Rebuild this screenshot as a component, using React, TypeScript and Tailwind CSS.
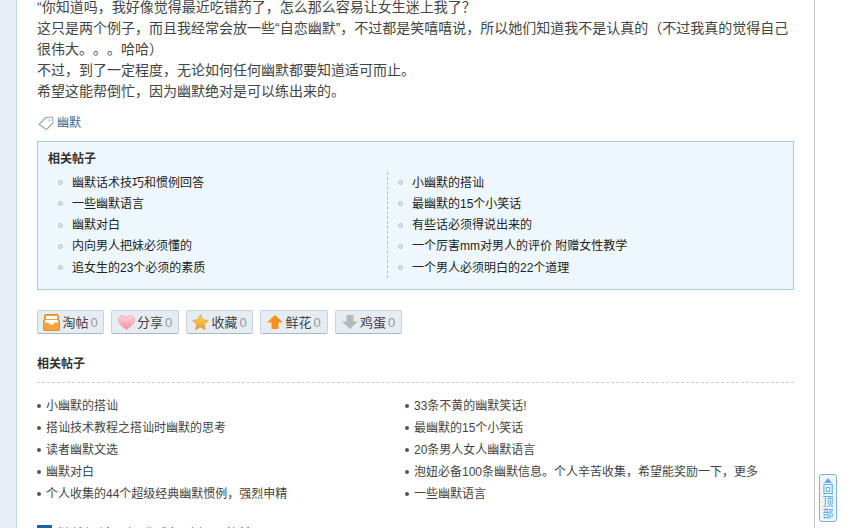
const FONT = "font-['Liberation_Sans','Noto_Sans_CJK_SC',sans-serif] [text-spacing-trim:space-all]";

const boxLeft = ['幽默话术技巧和惯例回答', '一些幽默语言', '幽默对白', '内向男人把妹必须懂的', '追女生的23个必须的素质'];
const boxRight = ['小幽默的搭讪', '最幽默的15个小笑话', '有些话必须得说出来的', '一个厉害mm对男人的评价 附赠女性教学', '一个男人必须明白的22个道理'];
const listLeft = ['小幽默的搭讪', '搭讪技术教程之搭讪时幽默的思考', '读者幽默文选', '幽默对白', '个人收集的44个超级经典幽默惯例，强烈申精'];
const listRight = ['33条不黄的幽默笑话!', '最幽默的15个小笑话', '20条男人女人幽默语言', '泡妞必备100条幽默信息。个人辛苦收集，希望能奖励一下，更多', '一些幽默语言'];

function Tray() {
  return (
    <svg width="17" height="17" viewBox="0 0 17 17" className="shrink-0">
      <path d="M3 .5h11a1.500 1.500 0 0 1 1.500 1.500v3l1 2v8a1.500 1.500 0 0 1-1.500 1.500H2A1.500 1.500 0 0 1 .5 15V7l1-2V2A1.500 1.500 0 0 1 3 .5z" fill="#f2a33a" stroke="#e0922a" />
      <rect x="3" y="2" width="11" height="3" fill="#fff" />
      <path d="M2.500 6h12l1 2.500h-4l-1 2h-4l-1-2h-4z" fill="#fff" />
    </svg>
  );
}
function Heart() {
  return (
    <svg width="17" height="15" viewBox="0 0 17 15" className="shrink-0">
      <defs>
        <linearGradient id="hg" x1="0" y1="0" x2="0" y2="1">
          <stop offset="0" stopColor="#ffd9de" />
          <stop offset="1" stopColor="#f78a98" />
        </linearGradient>
      </defs>
      <path d="M8.500 14.500C3 10.500.5 8 .5 4.800.5 2.300 2.400.7 4.600.7c1.700 0 3 .9 3.900 2.300C9.400 1.600 10.700.7 12.400.7c2.200 0 4.100 1.600 4.100 4.100 0 3.200-2.500 5.700-8 9.700z" fill="url(#hg)" stroke="#f4a8b2" />
    </svg>
  );
}
function Star() {
  return (
    <svg width="17" height="16" viewBox="0 0 17 16" className="shrink-0">
      <defs>
        <linearGradient id="sg" x1="0" y1="0" x2="0" y2="1">
          <stop offset="0" stopColor="#ffd75e" />
          <stop offset="1" stopColor="#f09a2a" />
        </linearGradient>
      </defs>
      <path d="M8.500.8l2.400 4.900 5.400.8-3.900 3.800.9 5.300-4.800-2.500-4.800 2.500.9-5.300L.7 6.500l5.400-.8z" fill="url(#sg)" stroke="#e0a040" strokeWidth="0.8" />
    </svg>
  );
}
function ArrowUp() {
  return (
    <svg width="16" height="14" viewBox="0 0 16 14" className="shrink-0">
      <path d="M8 0l8 7.500h-4.500V14h-7V7.500H0z" fill="#f7911e" />
    </svg>
  );
}
function ArrowDown() {
  return (
    <svg width="16" height="14" viewBox="0 0 16 14" className="shrink-0">
      <path d="M8 14L0 6.500h4.500V0h7v6.500H16z" fill="#b8b8b8" />
    </svg>
  );
}

function ActionButton({ icon, label, width }: { icon: React.ReactNode; label: string; width: string }) {
  return (
    <div className={`flex h-6 items-center justify-center gap-[2px] rounded-[2px] border border-[#c6d2de] border-b-[#a9b8c6] bg-[#e5edf2] text-[13px] leading-none text-[#444] ${width}`}>
      {icon}
      <span>{label}</span>
      <span className="text-[#999]">0</span>
    </div>
  );
}

function BoxColumn({ items, divided }: { items: string[]; divided?: boolean }) {
  return (
    <ul className={`flex flex-col pl-[10px] ${divided ? 'border-l border-dashed border-[#bbb]' : ''}`}>
      {items.map((t) => (
        <li key={t} className="flex h-[21.25px] items-center text-[12px] text-[#222]">
          <span className="mr-[9px] h-[5px] w-[5px] shrink-0 rounded-full border border-[#b5bfc6] bg-[#dde3e8]" />
          <span>{t}</span>
        </li>
      ))}
    </ul>
  );
}

function ListColumn({ items }: { items: string[] }) {
  return (
    <ul className="flex flex-col">
      {items.map((t) => (
        <li key={t} className="flex h-[22px] items-center text-[12px] text-[#444]">
          <span className="mr-[5px] h-[4px] w-[4px] shrink-0 rounded-full bg-[#555]" />
          {t}
        </li>
      ))}
    </ul>
  );
}

export default function App() {
  return (
    <div className={`flex h-[528px] w-[846px] overflow-hidden bg-white ${FONT}`}>
      <div className="w-[17px] shrink-0 border-r border-[#c5d6e4] bg-[#e6edf4]" />
      <main className="h-[528px] w-[798px] shrink-0 overflow-hidden border-r border-[#c8c8c8] pl-5 pr-5">
        <div className="-mt-[3px] text-[14px] leading-[21px] text-[#444]">
          <p>“你知道吗，我好像觉得最近吃错药了，怎么那么容易让女生迷上我了？</p>
          <p>这只是两个例子，而且我经常会放一些“自恋幽默”，不过都是笑嘻嘻说，所以她们知道我不是认真的（不过我真的觉得自己很伟大。。。哈哈）</p>
          <p>不过，到了一定程度，无论如何任何幽默都要知道适可而止。</p>
          <p>希望这能帮倒忙，因为幽默绝对是可以练出来的。</p>
        </div>

        <div className="mt-[11px] flex h-[20px] items-center gap-[3px] pl-[1px] text-[12px] text-[#3c6a95]">
          <svg width="16" height="14" viewBox="0 0 16 14" className="shrink-0">
            <path d="M1 8.500L8 1.500 14.500 1l.5 6-6.500 6.500z" fill="#fff" stroke="#9aa7b2" strokeWidth="1.100" strokeLinejoin="round" />
            <circle cx="11.500" cy="4.300" r="1.200" fill="#c8d0d8" />
          </svg>
          <span>幽默</span>
        </div>

        <section className="mt-[8px] h-[149px] w-[757px] border border-[#a5cfd8] bg-[#eef7fd] px-[10px] pt-[7px]">
          <h3 className="text-[12px] font-bold leading-[20px] text-[#333]">相关帖子</h3>
          <div className="grid grid-cols-[339px_1fr] pt-[3px]">
            <BoxColumn items={boxLeft} />
            <BoxColumn items={boxRight} divided />
          </div>
        </section>

        <div className="mt-[20px] flex gap-[7px]">
          <ActionButton icon={<Tray />} label="淘帖" width="w-[67px]" />
          <ActionButton icon={<Heart />} label="分享" width="w-[68px]" />
          <ActionButton icon={<Star />} label="收藏" width="w-[67px]" />
          <ActionButton icon={<ArrowUp />} label="鲜花" width="w-[68px]" />
          <ActionButton icon={<ArrowDown />} label="鸡蛋" width="w-[67px]" />
        </div>

        <h3 className="mt-[21px] text-[12px] font-bold leading-[18px] text-[#333]">相关帖子</h3>
        <div className="mt-[9px] border-t border-dashed border-[#ccc]" />

        <div className="mt-[12px] grid grid-cols-[368px_1fr] gap-0">
          <ListColumn items={listLeft} />
          <ListColumn items={listRight} />
        </div>

        <div className="mt-[19px] flex items-start gap-[5px] text-[14px] leading-[20px] text-[#c00]">
          <span className="mt-[1px] h-[13px] w-[15px] shrink-0 bg-[#1f5fa8]" />
          <span>继续阅读：提升或打破僵局的技巧</span>
        </div>
      </main>

      <div className="flex flex-1 items-start pl-[4px] pt-[474px]">
        <div className="flex h-[48px] w-[18px] flex-col items-center rounded-[3px] border border-[#7fb0dc] bg-[#eef6fc] text-[11px] leading-[12px] text-[#5b9bd5]">
          <svg width="8" height="5" viewBox="0 0 8 5" className="mt-[3px] mb-[1px] shrink-0">
            <path d="M4 0l4 5H0z" fill="#6ea6d8" />
          </svg>
          <span>回</span>
          <span>顶</span>
          <span>部</span>
        </div>
      </div>
    </div>
  );
}
